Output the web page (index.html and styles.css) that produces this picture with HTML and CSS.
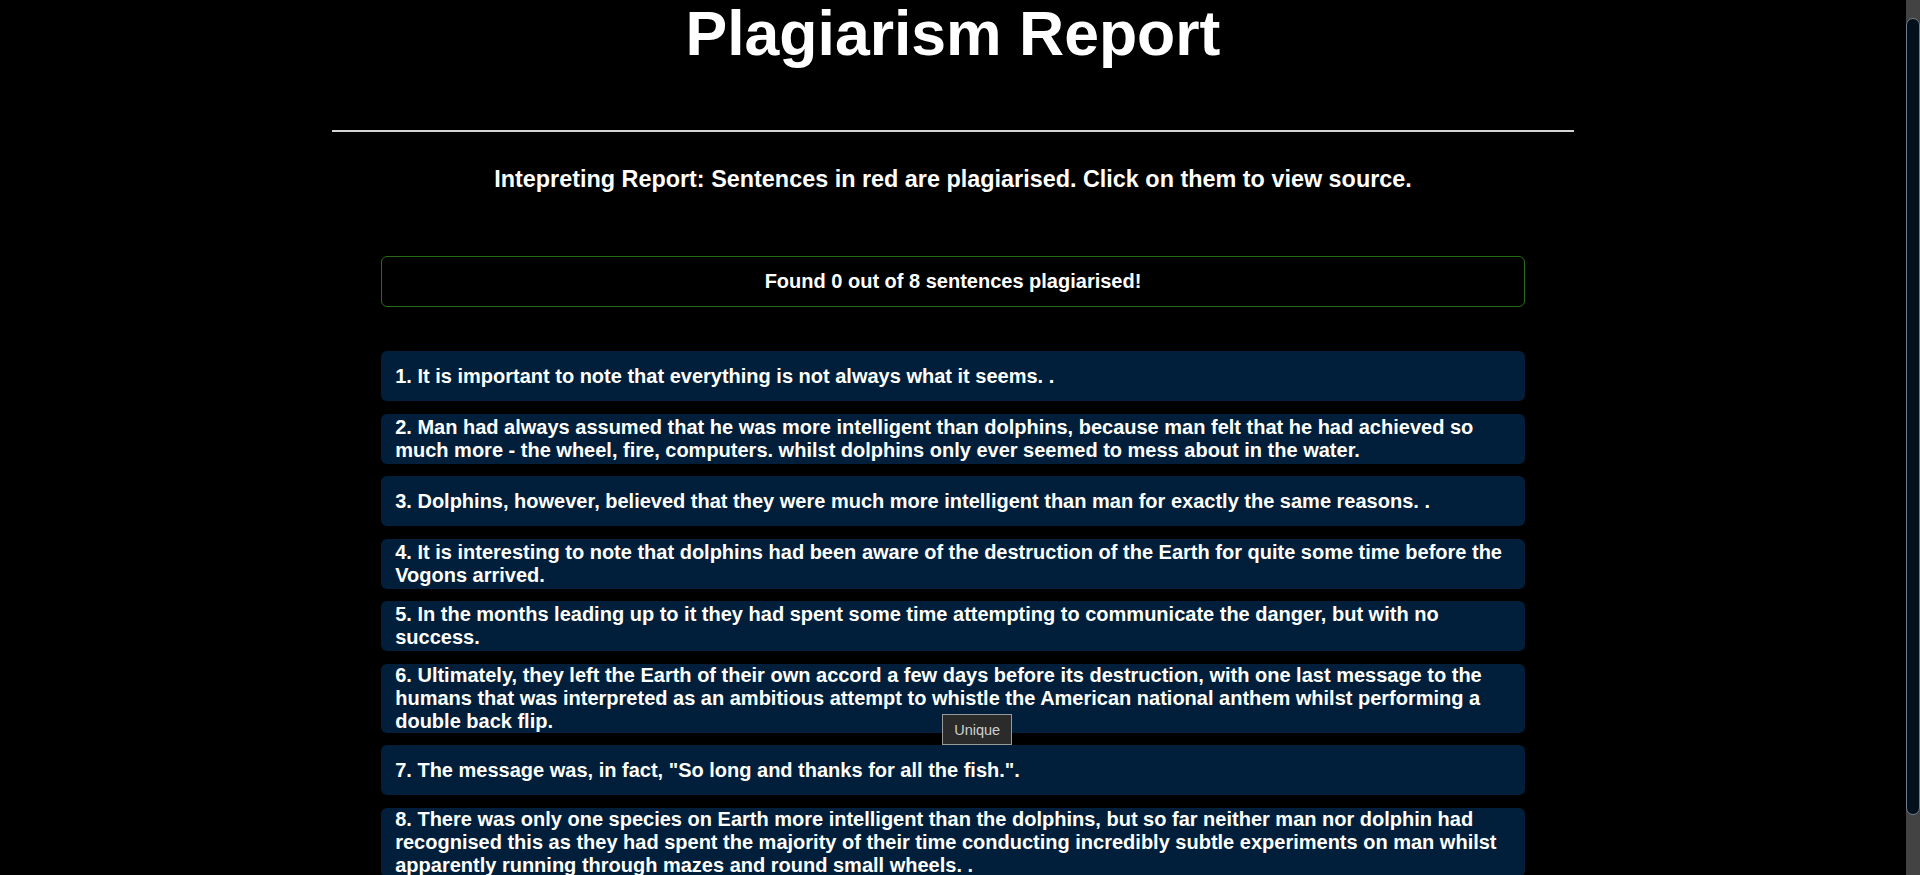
FILE: index.html
```html
<!DOCTYPE html>
<html lang="en">
<head>
<meta charset="utf-8">
<title>Plagiarism Report</title>
<link rel="stylesheet" href="styles.css">
</head>
<body>
<header class="header">
  <h1 class="title">Plagiarism Report</h1>
  <hr class="rule">
  <h3 class="hint">Intepreting Report: Sentences in red are plagiarised. Click on them to view source.</h3>
</header>
<main class="report">
  <div class="summary">Found 0 out of 8 sentences plagiarised!</div>
  <ol class="sentences">
    <li class="sentence">1. It is important to note that everything is not always what it seems. .</li>
    <li class="sentence">2. Man had always assumed that he was more intelligent than dolphins, because man felt that he had achieved so much more - the wheel, fire, computers. whilst dolphins only ever seemed to mess about in the water.</li>
    <li class="sentence">3. Dolphins, however, believed that they were much more intelligent than man for exactly the same reasons. .</li>
    <li class="sentence">4. It is interesting to note that dolphins had been aware of the destruction of the Earth for quite some time before the Vogons arrived.</li>
    <li class="sentence">5. In the months leading up to it they had spent some time attempting to communicate the danger, but with no success.</li>
    <li class="sentence">6. Ultimately, they left the Earth of their own accord a few days before its destruction, with one last message to the humans that was interpreted as an ambitious attempt to whistle the American national anthem whilst performing a double back flip.</li>
    <li class="sentence">7. The message was, in fact, "So long and thanks for all the fish.".</li>
    <li class="sentence">8. There was only one species on Earth more intelligent than the dolphins, but so far neither man nor dolphin had recognised this as they had spent the majority of their time conducting incredibly subtle experiments on man whilst apparently running through mazes and round small wheels. .</li>
    <li class="tooltip">Unique</li>
  </ol>
</main>
<div class="scrollbar" aria-hidden="true"><div class="scrollbar-thumb"></div></div>
<script src="script.js"></script>
</body>
</html>
```

FILE: styles.css
```css
html {
  background: #000;
  scrollbar-width: none;
}
html::-webkit-scrollbar {
  display: none;
}
body {
  margin: 0;
  padding: 0 14px 64px 0;
  background: #000;
  color: #fff;
  font-family: "Liberation Sans", Arial, sans-serif;
}
.scrollbar {
  position: fixed;
  top: 0;
  right: 0;
  width: 14px;
  height: 100vh;
  box-sizing: border-box;
  padding-top: 18px;
  background: #434343;
}
.scrollbar-thumb {
  height: 797px;
  box-sizing: border-box;
  background: #03111c;
  border: 1px solid #6f7d8c;
  border-radius: 7px;
}
.header {
  display: flex;
  flex-direction: column;
  align-items: center;
  padding-top: 16px;
}
.title {
  margin: 0;
  font-size: 62.5px;
  line-height: 74px;
  font-weight: 700;
}
.rule {
  width: 1242px;
  height: 0;
  margin: 60px 0 0;
  border: 0;
  border-top: 2px solid #d4d4d4;
}
.hint {
  margin: 34px 0 0;
  font-size: 23.4px;
  line-height: 27px;
  font-weight: 700;
}
.report {
  width: 60%;
  margin: 0 auto;
  display: flex;
  flex-direction: column;
}
.summary {
  margin-top: 62.5px;
  height: 51px;
  box-sizing: border-box;
  border: 1px solid #2b6a1c;
  border-radius: 6px;
  display: flex;
  align-items: center;
  justify-content: center;
  font-size: 20px;
  font-weight: 700;
  line-height: 23px;
}
.sentences {
  position: relative;
  list-style: none;
  margin: 44.5px 0 0;
  padding: 0;
  display: flex;
  flex-direction: column;
  gap: 12.5px;
}
.sentence {
  min-height: 50px;
  box-sizing: border-box;
  display: flex;
  align-items: center;
  padding: 0 13px 0 14px;
  background: #011f3a;
  border-radius: 6px;
  font-size: 20px;
  font-weight: 700;
  line-height: 23px;
}
.tooltip {
  position: absolute;
  left: 561px;
  top: 363px;
  width: 70px;
  height: 31px;
  box-sizing: border-box;
  display: flex;
  align-items: center;
  justify-content: center;
  background: #2b2b2b;
  border: 1px solid #9a9a9a;
  color: #d0d0d0;
  font-size: 14.5px;
  font-weight: 400;
}
```

FILE: script.js
```js
window.scrollTo(0, 20);
window.addEventListener('load', function () {
  window.scrollTo(0, 20);
});
```
